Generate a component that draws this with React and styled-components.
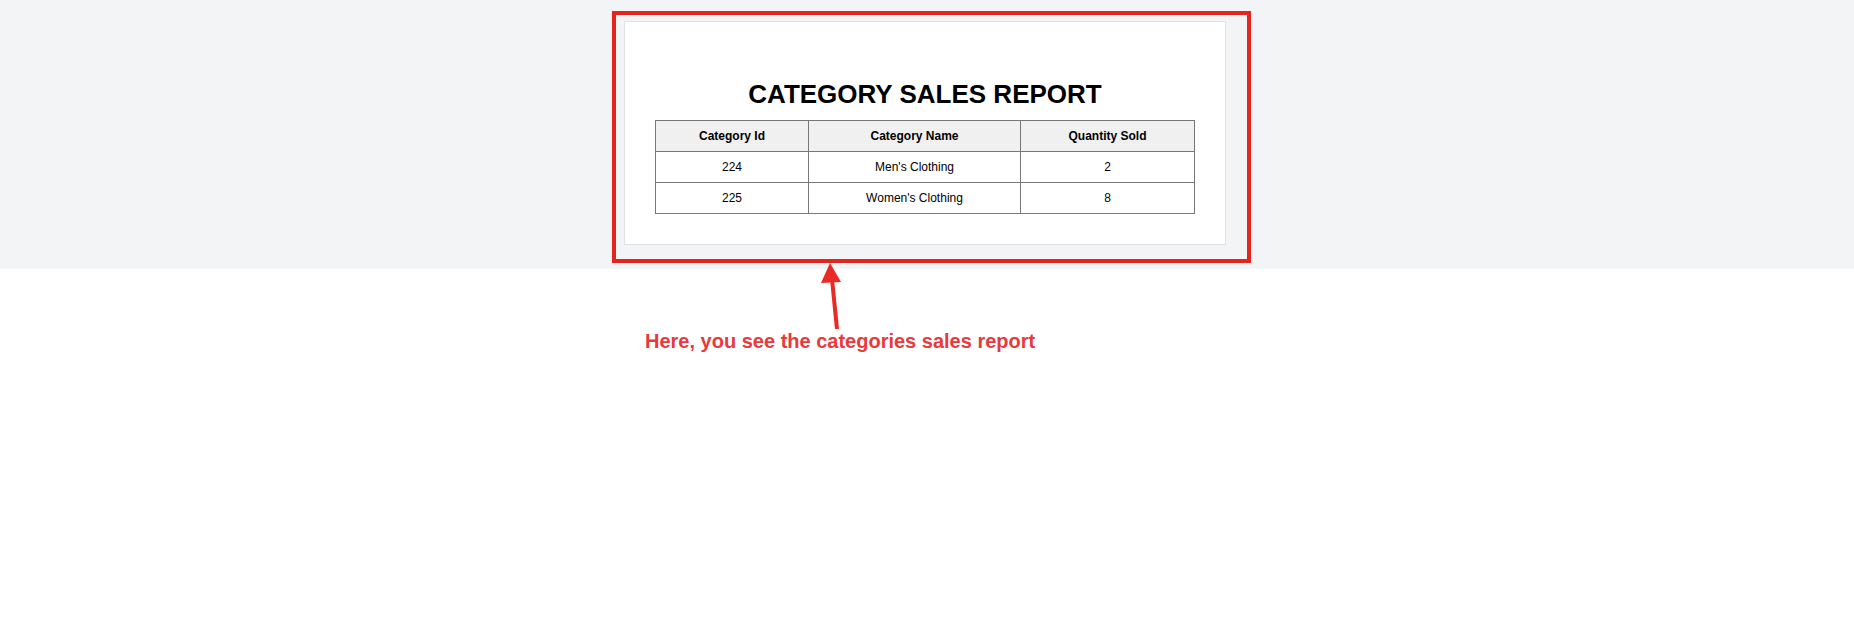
import styled, { createGlobalStyle } from "styled-components";

const rows = [
  { id: 224, name: "Men's Clothing", qty: 2 },
  { id: 225, name: "Women's Clothing", qty: 8 },
];

export default function App() {
  return (
    <>
      <GlobalStyle />
      <Band>
        <Frame>
          <Card>
            <Title>CATEGORY SALES REPORT</Title>
            <Table>
              <colgroup>
                <col style={{ width: 153 }} />
                <col style={{ width: 212 }} />
                <col style={{ width: 174 }} />
              </colgroup>
              <thead>
                <tr>
                  <Th>Category Id</Th>
                  <Th>Category Name</Th>
                  <Th>Quantity Sold</Th>
                </tr>
              </thead>
              <tbody>
                {rows.map((r) => (
                  <tr key={r.id}>
                    <Td>{r.id}</Td>
                    <Td>{r.name}</Td>
                    <Td>{r.qty}</Td>
                  </tr>
                ))}
              </tbody>
            </Table>
          </Card>
        </Frame>
      </Band>
      <Annotation>
        <Arrow viewBox="0 0 24 66" width="24" height="66">
          <line x1="12" y1="16" x2="17" y2="66" stroke="#ea2a24" strokeWidth="4" />
          <polygon points="10,0 1,20 21,19" fill="#ea2a24" />
        </Arrow>
        <Caption>Here, you see the categories sales report</Caption>
      </Annotation>
    </>
  );
}

const GlobalStyle = createGlobalStyle`
  body {
    margin: 0;
    background: #ffffff;
    font-family: "Liberation Sans", Arial, sans-serif;
  }
`;

const Band = styled.div`
  height: 269px;
  box-sizing: border-box;
  padding: 11px 0 0 612px;
  background: #f3f4f6;
`;

const Frame = styled.div`
  width: 639px;
  height: 252px;
  box-sizing: border-box;
  border: 4px solid #e5241f;
  padding: 6px 0 0 8px;
`;

const Card = styled.div`
  width: 602px;
  height: 224px;
  box-sizing: border-box;
  background: #ffffff;
  border: 1px solid #e0e2e5;
  padding-top: 57px;
  display: flex;
  flex-direction: column;
  align-items: center;
`;

const Title = styled.h1`
  margin: 0 0 11px;
  font-size: 26px;
  line-height: 30px;
  font-weight: bold;
  color: #000;
  text-align: center;
`;

const Table = styled.table`
  width: 539px;
  border-collapse: collapse;
  table-layout: fixed;
  font-size: 12px;
  color: #000;
`;

const Th = styled.th`
  height: 30px;
  padding: 0;
  border: 1px solid #777;
  background: #f0f0f0;
  font-weight: bold;
  text-align: center;
`;

const Td = styled.td`
  height: 30px;
  padding: 0;
  border: 1px solid #777;
  text-align: center;
`;

const Annotation = styled.div`
  display: flex;
  flex-direction: column;
  align-items: flex-start;
  padding-left: 645px;
`;

const Arrow = styled.svg`
  display: block;
  margin: -6px 0 0 175px;
`;

const Caption = styled.div`
  font-size: 20px;
  line-height: 24px;
  font-weight: bold;
  color: #e8393c;
`;
